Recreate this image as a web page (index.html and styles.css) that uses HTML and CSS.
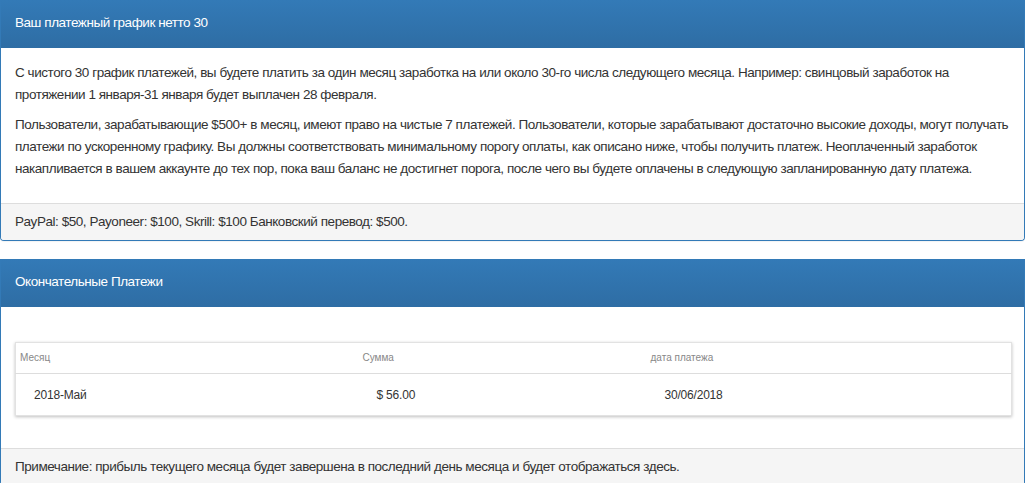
FILE: index.html
```html
<!DOCTYPE html>
<html lang="ru">
<head>
<meta charset="utf-8">
<link rel="stylesheet" href="styles.css">
</head>
<body>
<div class="panel">
  <div class="panel-heading">Ваш платежный график нетто 30</div>
  <div class="panel-body">
    <p>С чистого 30 график платежей, вы будете платить за один месяц заработка на или около 30-го числа следующего месяца. Например: свинцовый заработок на протяжении 1 января-31 января будет выплачен 28 февраля.</p>
    <p>Пользователи, зарабатывающие $500+ в месяц, имеют право на чистые 7 платежей. Пользователи, которые зарабатывают достаточно высокие доходы, могут получать платежи по ускоренному графику. Вы должны соответствовать минимальному порогу оплаты, как описано ниже, чтобы получить платеж. Неоплаченный заработок накапливается в вашем аккаунте до тех пор, пока ваш баланс не достигнет порога, после чего вы будете оплачены в следующую запланированную дату платежа.</p>
  </div>
  <div class="panel-footer">PayPal: $50, Payoneer: $100, Skrill: $100 Банковский перевод: $500.</div>
</div>
<div class="panel">
  <div class="panel-heading">Окончательные Платежи</div>
  <div class="panel-body table-body">
    <table class="pay-table">
      <colgroup><col class="c1"><col class="c2"><col class="c3"></colgroup>
      <thead>
        <tr><th>Месяц</th><th>Сумма</th><th>дата платежа</th></tr>
      </thead>
      <tbody>
        <tr><td>2018-Май</td><td>$ 56.00</td><td>30/06/2018</td></tr>
      </tbody>
    </table>
  </div>
  <div class="panel-footer">Примечание: прибыль текущего месяца будет завершена в последний день месяца и будет отображаться здесь.</div>
</div>
</body>
</html>
```
FILE: styles.css
```css
html, body {
  margin: 0;
  padding: 0;
  background: #fff;
}
body {
  font-family: "Liberation Sans", Arial, sans-serif;
  font-size: 13.5px;
  letter-spacing: -0.45px;
  color: #333;
  width: 1025px;
}
.panel {
  border: 1px solid #337ab7;
  border-top: 0;
  border-radius: 0 0 4px 4px;
  margin-bottom: 18px;
  background: #fff;
  box-shadow: 0 1px 1px rgba(0,0,0,0.05);
}
.panel-heading {
  background: linear-gradient(to bottom, #337ab7 0%, #2e6da4 100%);
  color: #fff;
  padding: 0 14px;
  height: 48px;
  line-height: 46px;
}
.panel-body {
  padding: 14px 14px 15px;
}
.panel-body p {
  margin: 0 0 8px;
  line-height: 22px;
}
.panel-footer {
  background: #f5f5f5;
  border-top: 1px solid #ddd;
  padding: 8px 14px;
  line-height: 20px;
  border-radius: 0 0 3px 3px;
}
.table-body {
  padding: 35px 12px 32px 14px;
}
.pay-table {
  width: 997px;
  border-collapse: collapse;
  box-shadow: 0 1px 3px rgba(0,0,0,0.25);
  border: 1px solid #e2e2e2;
  table-layout: fixed;
}
.pay-table .c1 { width: 343px; }
.pay-table .c2 { width: 288px; }
.pay-table th {
  box-sizing: border-box;
  text-align: left;
  font-weight: normal;
  font-size: 10px;
  letter-spacing: 0;
  color: #888;
  padding: 9px 4px 9px;
  line-height: 12px;
  border-bottom: 1px solid #ddd;
}
.pay-table td {
  box-sizing: border-box;
  font-size: 12px;
  letter-spacing: -0.2px;
  color: #333;
  padding: 13px 18px 12px;
  line-height: 16px;
}
```
